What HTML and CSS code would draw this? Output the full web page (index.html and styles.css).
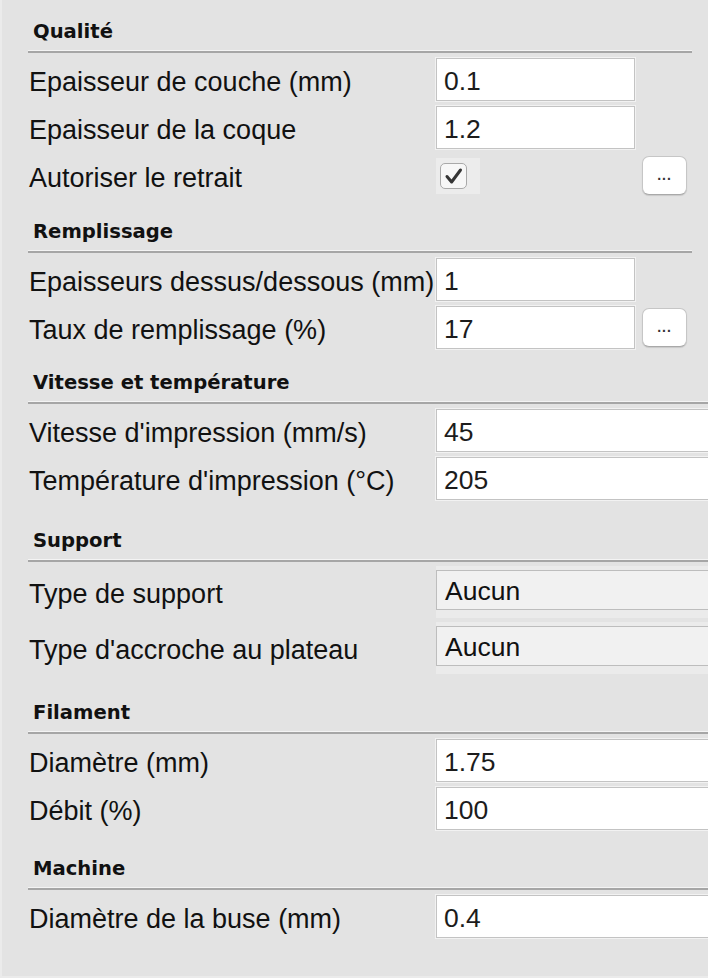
FILE: index.html
```html
<!DOCTYPE html>
<html lang="fr">
<head>
<meta charset="utf-8">
<title>Paramètres</title>
<link rel="stylesheet" href="styles.css">
</head>
<body>
<div class="panel">

  <section class="section first">
    <div class="title">Qualité</div>
    <div class="rule"></div>
    <div class="rows">
      <div class="row"><span class="label">Epaisseur de couche (mm)</span><div class="input">0.1</div></div>
      <div class="row"><span class="label">Epaisseur de la coque</span><div class="input">1.2</div></div>
      <div class="row"><span class="label">Autoriser le retrait</span>
        <div class="checkcell">
          <div class="checkbox">
            <svg viewBox="0 0 22 22" width="22" height="22"><path d="M4 11.5 L8.6 17 L17.5 5" fill="none" stroke="#353535" stroke-width="3" stroke-linecap="round" stroke-linejoin="round"/></svg>
          </div>
        </div>
        <div class="dots">...</div>
      </div>
    </div>
  </section>

  <section class="section gap-r">
    <div class="title">Remplissage</div>
    <div class="rule"></div>
    <div class="rows">
      <div class="row"><span class="label">Epaisseurs dessus/dessous (mm)</span><div class="input">1</div></div>
      <div class="row"><span class="label">Taux de remplissage (%)</span><div class="input">17</div><div class="dots">...</div></div>
    </div>
  </section>

  <section class="section wide gap-v">
    <div class="title">Vitesse et température</div>
    <div class="rule"></div>
    <div class="rows">
      <div class="row"><span class="label">Vitesse d'impression (mm/s)</span><div class="input long">45</div></div>
      <div class="row"><span class="label">Température d'impression (°C)</span><div class="input long">205</div></div>
    </div>
  </section>

  <section class="section wide gap-s">
    <div class="title">Support</div>
    <div class="rule"></div>
    <div class="rows selects">
      <div class="row srow"><span class="label">Type de support</span><div class="selectcell"><div class="select">Aucun</div></div></div>
      <div class="row srow"><span class="label">Type d'accroche au plateau</span><div class="selectcell"><div class="select">Aucun</div></div></div>
    </div>
  </section>

  <section class="section wide gap-f">
    <div class="title">Filament</div>
    <div class="rule"></div>
    <div class="rows">
      <div class="row"><span class="label">Diamètre (mm)</span><div class="input long">1.75</div></div>
      <div class="row"><span class="label">Débit (%)</span><div class="input long">100</div></div>
    </div>
  </section>

  <section class="section wide gap-f">
    <div class="title">Machine</div>
    <div class="rule"></div>
    <div class="rows">
      <div class="row"><span class="label">Diamètre de la buse (mm)</span><div class="input long">0.4</div></div>
    </div>
  </section>

</div>
</body>
</html>
```
FILE: styles.css
```css
html, body {
  margin: 0;
  padding: 0;
  background: #e3e3e3;
  overflow: hidden;
}

.panel {
  width: 706px;
  height: 976px;
  border-left: 2px solid #ebebeb;
  border-bottom: 2px solid #ebebeb;
  background: #e3e3e3;
  overflow: hidden;
  font-family: "Liberation Sans", Arial, sans-serif;
  color: #111;
}

.section {
  margin-left: 26px;
  width: 664px;
}

.section.wide {
  width: 900px;
}

.section.first {
  padding-top: 20px;
}

.section.gap-r {
  margin-top: 23px;
}

.section.gap-v {
  margin-top: 22px;
}

.section.gap-s {
  margin-top: 29px;
}

.section.gap-f {
  margin-top: 27px;
}

.title {
  height: 24px;
  line-height: 24px;
  padding-left: 5px;
  font-family: "DejaVu Sans", sans-serif;
  font-weight: bold;
  font-size: 19.6px;
  color: #111;
}

.rule {
  margin-top: 6px;
  height: 1px;
  background: #f4f4f4;
  border-bottom: 2px solid #a6a6a6;
}

.rows {
  margin-top: 5px;
  display: flex;
  flex-direction: column;
  gap: 5px;
}

.row {
  display: flex;
  align-items: center;
  height: 43px;
}

.label {
  width: 408px;
  flex: none;
  padding-left: 1px;
  padding-top: 5px;
  box-sizing: border-box;
  font-size: 27px;
  white-space: nowrap;
  color: #111;
}

.input {
  box-sizing: border-box;
  width: 199px;
  height: 43px;
  flex: none;
  background: #fff;
  border: 1px solid #c3c3c3;
  box-shadow: 0 0 0 1px #f2f2f2;
  padding-left: 7px;
  padding-top: 2px;
  font-size: 26.5px;
  line-height: 41px;
  color: #1c1c1c;
}

.input.long {
  width: 400px;
}

.checkcell {
  width: 44px;
  height: 36px;
  background: #ececec;
  display: flex;
  align-items: center;
  justify-content: flex-start;
  padding-left: 4px;
  box-sizing: border-box;
}

.checkbox {
  width: 27px;
  height: 26px;
  box-sizing: border-box;
  border: 1px solid #a9a9a9;
  border-radius: 5px;
  background: #f7f7f7;
  display: flex;
  align-items: center;
  justify-content: center;
}

.dots {
  margin-left: auto;
  margin-right: 5px;
  width: 45px;
  height: 39px;
  box-sizing: border-box;
  background: #fff;
  border: 1px solid #c6c6c6;
  border-bottom-color: #a9a9a9;
  border-radius: 7px;
  box-shadow: 0 1px 1px rgba(0,0,0,0.12);
  font-family: "Liberation Sans", Arial, sans-serif;
  font-weight: bold;
  font-size: 14px;
  letter-spacing: 1px;
  line-height: 36px;
  text-align: center;
  color: #333;
}

.rows.selects {
  gap: 4px;
  margin-top: 4px;
}

.row.srow {
  height: 52px;
  align-items: center;
}

.selectcell {
  align-self: stretch;
  width: 400px;
  background: #ebebeb;
  padding-top: 4px;
  box-sizing: border-box;
}

.select {
  box-sizing: border-box;
  height: 40px;
  background: #f1f1f1;
  border: 1px solid #bdbdbd;
  padding-left: 8px;
  padding-top: 2px;
  font-size: 26.5px;
  line-height: 36px;
  color: #111;
}
```
